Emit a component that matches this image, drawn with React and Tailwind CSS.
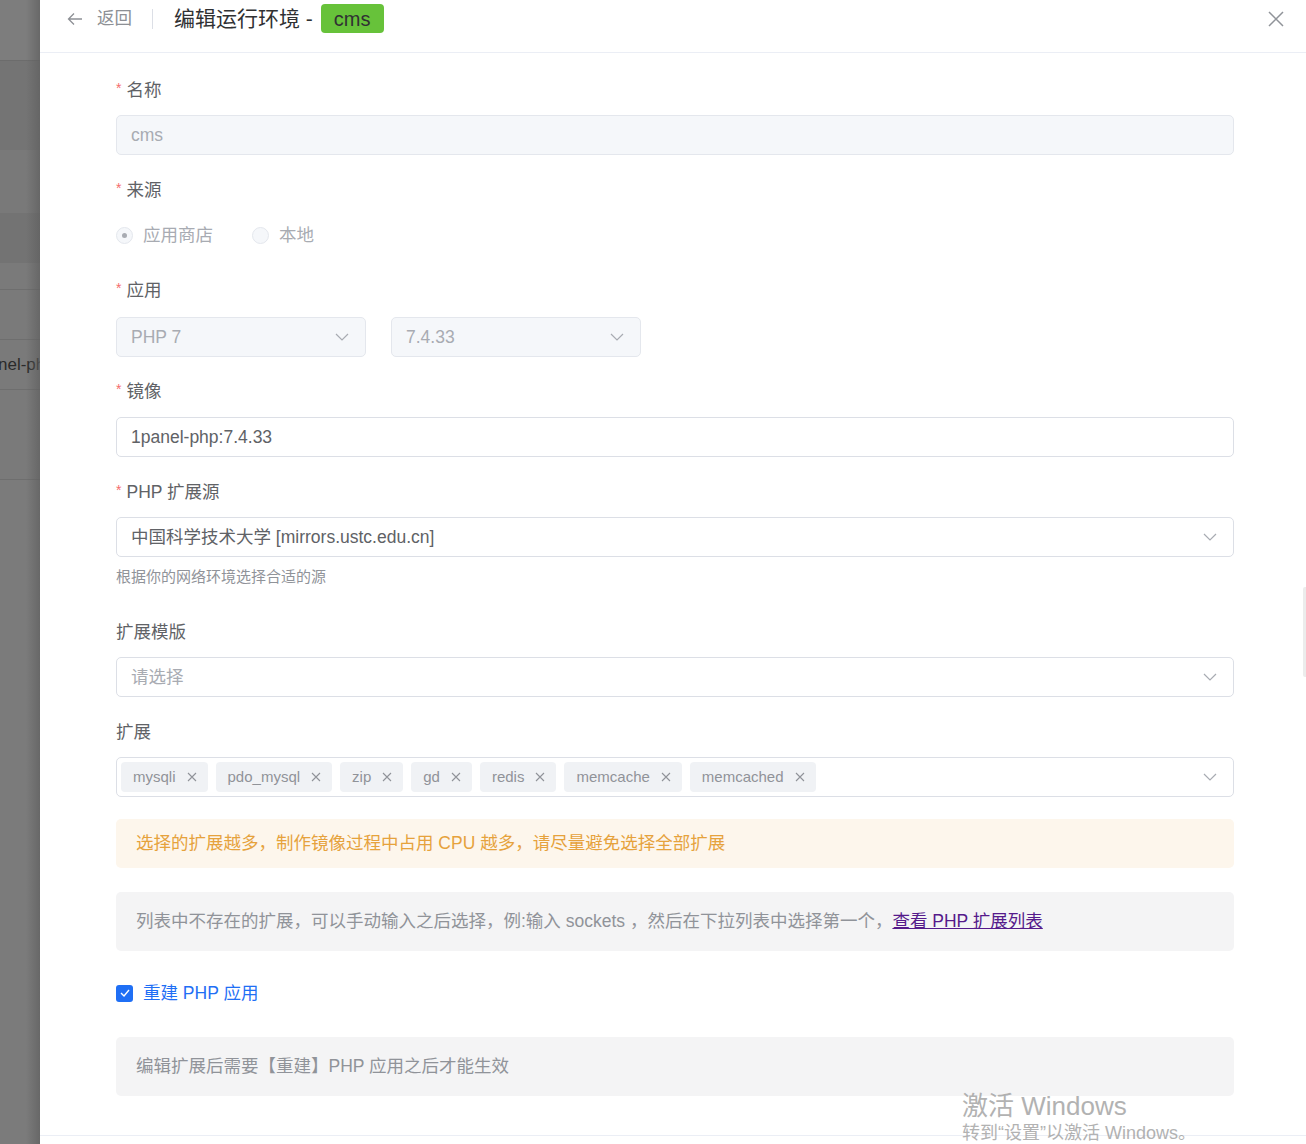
import React from "react";

const FONT = { fontFamily: '"Liberation Sans", Arial, "Noto Sans CJK SC", sans-serif' };

function Chevron({ className = "" }) {
  return (
    <svg width="14" height="8" viewBox="0 0 14 8" className={className} fill="none">
      <path d="M1 1 L7 7 L13 1" stroke="#a8abb2" strokeWidth="1.2" />
    </svg>
  );
}

function Label({ children, required, mb = "mb-[10px]" }) {
  return (
    <div className={`h-[30px] leading-[30px] ${mb} text-[17.5px] text-[#606266] flex items-center`}>
      {required && <span className="text-[#f56c6c] text-[14px] mr-[5px] relative -top-[2px]">*</span>}
      <span>{children}</span>
    </div>
  );
}

function Select({ text, placeholder, disabled, className = "" }) {
  return (
    <div
      className={`h-[40px] rounded-[5px] border flex items-center pl-[14px] pr-[16px] ${
        disabled ? "bg-[#f5f7fa] border-[#e4e7ed]" : "bg-white border-[#dcdfe6]"
      } ${className}`}
    >
      <span className={`flex-1 text-[17.5px] ${placeholder || disabled ? "text-[#a8abb2]" : "text-[#606266]"}`}>
        {text}
      </span>
      <Chevron />
    </div>
  );
}

function Tag({ children }) {
  return (
    <div className="h-[30px] rounded-[4px] bg-[#f0f2f5] flex items-center pl-[12px] pr-[11px] text-[15px] text-[#909399]">
      <span>{children}</span>
      <svg width="10" height="10" viewBox="0 0 10 10" className="ml-[11px]">
        <path d="M1 1 L9 9 M9 1 L1 9" stroke="#909399" strokeWidth="1.1" />
      </svg>
    </div>
  );
}

export default function App() {
  return (
    <div className="relative w-[1306px] h-[1144px] overflow-hidden flex bg-white" style={FONT}>
      {/* left overlay strip */}
      <div className="relative w-[40px] h-full flex flex-col bg-[#7a7a7a] shrink-0 overflow-hidden">
        <div className="h-[60px] bg-[#7d7d7d]" />
        <div className="h-[90px] bg-[#747474] border-t border-[#6c6c6c]" />
        <div className="h-[63px] bg-[#797979]" />
        <div className="h-[50px] bg-[#737373]" />
        <div className="h-[27px] bg-[#7a7a7a] border-b border-[#6e6e6e]" />
        <div className="h-[50px] bg-[#7a7a7a] border-b border-[#6e6e6e]" />
        <div className="h-[50px] bg-[#7a7a7a] border-b border-[#6e6e6e] flex items-center overflow-hidden">
          <span className="text-[17px] text-[#2a2a2a] -ml-[2px] whitespace-nowrap">nel-php</span>
        </div>
        <div className="h-[90px] bg-[#7a7a7a] border-b border-[#6e6e6e]" />
        <div className="flex-1 bg-[#7b7b7b]" />
        <div className="absolute top-0 right-0 w-[14px] h-full bg-gradient-to-r from-transparent to-[#5f5f5f] opacity-70" />
      </div>

      {/* drawer */}
      <div className="flex-1 flex flex-col h-full bg-white">
        {/* header */}
        <div className="h-[53px] shrink-0 border-b border-[#ebeef5] pl-[27px] pr-[22px] pt-[4px]">
          <div className="h-[29px] flex items-center">
            <svg width="16" height="14" viewBox="0 0 16 14" fill="none">
              <path d="M15 7 H1.5 M7 1.5 L1.5 7 L7 12.5" stroke="#8d9095" strokeWidth="1.3" />
            </svg>
            <span className="ml-[14px] text-[17.5px] text-[#8d9095]">返回</span>
            <div className="w-px h-[20px] bg-[#dcdfe6] ml-[20px] mr-[21px]" />
            <span className="text-[21px] text-[#303133]">编辑运行环境 -</span>
            <span className="ml-[8px] h-[29px] px-[13px] rounded-[4px] bg-[#67c23a] text-[20px] text-[#303133] flex items-center">
              cms
            </span>
            <div className="flex-1" />
            <svg width="16" height="16" viewBox="0 0 16 16">
              <path d="M1 1 L15 15 M15 1 L1 15" stroke="#909399" strokeWidth="1.5" />
            </svg>
          </div>
        </div>

        {/* body */}
        <div className="relative flex-1 overflow-hidden pl-[76px] pt-[22px]">
          <div className="w-[1118px] flex flex-col">
            <div className="mb-[20px]">
              <Label required>名称</Label>
              <div className="h-[40px] rounded-[5px] border border-[#e4e7ed] bg-[#f5f7fa] flex items-center px-[14px] text-[17.5px] text-[#a8abb2]">
                cms
              </div>
            </div>

            <div className="mb-[20px]">
              <Label required>来源</Label>
              <div className="h-[40px] flex items-center">
                <div className="flex items-center">
                  <span className="w-[17px] h-[17px] rounded-full border border-[#e4e7ed] bg-[#f5f7fa] flex items-center justify-center">
                    <span className="w-[5px] h-[5px] rounded-full bg-[#a8abb2]" />
                  </span>
                  <span className="ml-[10px] text-[17.5px] text-[#a8abb2]">应用商店</span>
                </div>
                <div className="flex items-center ml-[39px]">
                  <span className="w-[17px] h-[17px] rounded-full border border-[#e4e7ed] bg-[#f5f7fa]" />
                  <span className="ml-[10px] text-[17.5px] text-[#a8abb2]">本地</span>
                </div>
              </div>
            </div>

            <div className="mb-[19px]">
              <Label required mb="mb-[12px]">应用</Label>
              <div className="flex gap-[25px]">
                <Select text="PHP 7" disabled className="w-[250px]" />
                <Select text="7.4.33" disabled className="w-[250px]" />
              </div>
            </div>

            <div className="mb-[20px]">
              <Label required mb="mb-[11px]">镜像</Label>
              <div className="h-[40px] rounded-[5px] border border-[#dcdfe6] bg-white flex items-center px-[14px] text-[17.5px] text-[#606266]">
                1panel-php:7.4.33
              </div>
            </div>

            <div className="mb-[29px]">
              <Label required>PHP 扩展源</Label>
              <Select text="中国科学技术大学 [mirrors.ustc.edu.cn]" />
              <div className="mt-[9px] h-[22px] leading-[22px] text-[15px] text-[#909399]">
                根据你的网络环境选择合适的源
              </div>
            </div>

            <div className="mb-[20px]">
              <Label>扩展模版</Label>
              <Select text="请选择" placeholder />
            </div>

            <div className="mb-[22px]">
              <Label>扩展</Label>
              <div className="h-[40px] rounded-[5px] border border-[#dcdfe6] bg-white flex items-center pl-[4px] pr-[16px]">
                <div className="flex-1 flex items-center gap-[8px]">
                  <Tag>mysqli</Tag>
                  <Tag>pdo_mysql</Tag>
                  <Tag>zip</Tag>
                  <Tag>gd</Tag>
                  <Tag>redis</Tag>
                  <Tag>memcache</Tag>
                  <Tag>memcached</Tag>
                </div>
                <Chevron />
              </div>
            </div>

            <div className="h-[49px] rounded-[5px] bg-[#fdf6ec] flex items-center px-[20px] text-[17.5px] text-[#e6a23c]">
              选择的扩展越多，制作镜像过程中占用 CPU 越多，请尽量避免选择全部扩展
            </div>

            <div className="mt-[24px] h-[59px] rounded-[5px] bg-[#f4f4f5] flex items-center px-[20px] text-[17.5px] text-[#909399]">
              <span>列表中不存在的扩展，可以手动输入之后选择，例:输入 sockets ，然后在下拉列表中选择第一个，</span>
              <a href="#" className="text-[#551a8b] underline">
                查看 PHP 扩展列表
              </a>
            </div>

            <div className="mt-[22px] h-[40px] flex items-center">
              <span className="w-[17px] h-[17px] rounded-[3px] bg-[#1f6ff5] flex items-center justify-center">
                <svg width="10" height="8" viewBox="0 0 10 8" fill="none">
                  <path d="M1 4 L4 7 L9 1" stroke="white" strokeWidth="1.4" />
                </svg>
              </span>
              <span className="ml-[10px] text-[17.5px] text-[#1f6ff5]">重建 PHP 应用</span>
            </div>

            <div className="mt-[24px] h-[59px] rounded-[5px] bg-[#f4f4f5] flex items-center px-[20px] text-[17.5px] text-[#909399]">
              编辑扩展后需要【重建】PHP 应用之后才能生效
            </div>
          </div>
          <div className="absolute right-0 top-[534px] w-[3px] h-[90px] rounded-l-[2px] bg-[#ececec]" />
        </div>

        {/* footer */}
        <div className="h-[9px] shrink-0 border-t border-[#ebeef5]" />
      </div>

      {/* windows watermark */}
      <div className="absolute left-[962px] top-[1090px] text-[#a0a0a0] opacity-80 pointer-events-none">
        <div className="text-[26px] leading-[32px]">激活 Windows</div>
        <div className="text-[18px] leading-[24px] -mt-[1px]">转到“设置”以激活 Windows。</div>
      </div>
    </div>
  );
}
